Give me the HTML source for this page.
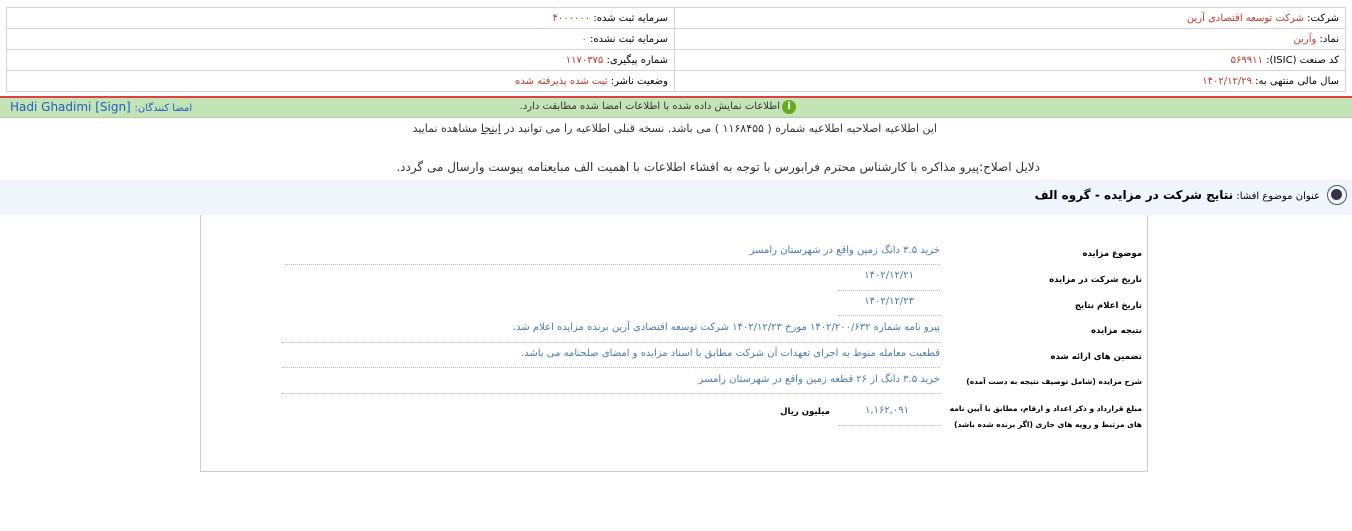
<!DOCTYPE html><html><head><meta charset="utf-8"><style>
body{margin:0;width:1352px;height:531px;background:#fff;font-family:"DejaVu Sans","Liberation Sans",sans-serif;font-size:10px;color:#000;position:relative;overflow:hidden}
.a{position:absolute;white-space:nowrap;direction:rtl}
.o{color:#c0392b}
.b{color:#4a7ab0}
table{position:absolute;left:6px;top:7px;width:1340px;border-collapse:collapse;direction:rtl}
td{border:1px solid #d4d4d4;height:20px;padding:0 6px;direction:rtl;text-align:right;font-size:10px}
.dl{position:absolute;border-bottom:1px dotted #bbb;height:0}
.lb{font-weight:bold;font-size:8.5px}
</style></head><body>
<table><tr><td style="width:658px">شرکت: <span class="o">شرکت توسعه اقتصادی آرین</span></td><td>سرمایه ثبت شده: <span class="o">۴۰۰۰۰۰۰</span></td></tr>
<tr><td>نماد: <span class="o">وآرین</span></td><td>سرمایه ثبت نشده: <span class="o">۰</span></td></tr>
<tr><td>کد صنعت (ISIC): <span class="o">۵۶۹۹۱۱</span></td><td>شماره پیگیری: <span class="o">۱۱۷۰۳۷۵</span></td></tr>
<tr><td>سال مالی منتهی به: <span class="o">۱۴۰۲/۱۲/۲۹</span></td><td>وضعیت ناشر: <span class="o">ثبت شده پذیرفته شده</span></td></tr></table>
<div style="position:absolute;left:0;top:96px;width:1352px;height:2px;background:#e04040"></div>
<div style="position:absolute;left:0;top:98px;width:1352px;height:19px;background:#c4e3b6;border-bottom:1px solid #b0d0a0"></div>
<div class="a" style="right:572px;top:101px;color:#333">اطلاعات نمایش داده شده با اطلاعات امضا شده مطابقت دارد.</div>
<div style="position:absolute;left:782px;top:100px;width:14px;height:14px;border-radius:50%;background:#6aaa20;color:#fff;font-size:10px;text-align:center;line-height:14px;font-weight:bold">i</div>
<div class="a" style="left:10px;top:100px;color:#2060c0;font-size:12px;direction:ltr">Hadi Ghadimi [Sign] <span style="font-size:10px">:امضا کنندگان</span></div>
<div class="a" style="right:415px;top:122px;font-size:11px;color:#333">این اطلاعیه اصلاحیه اطلاعیه شماره ( ۱۱۶۸۴۵۵ ) می باشد. نسخه قبلی اطلاعیه را می توانید در <u>اینجا</u> مشاهده نمایید</div>
<div class="a" style="right:312px;top:160px;font-size:12px;color:#333">دلایل اصلاح:پیرو مذاکره با کارشناس محترم فرابورس با توجه به افشاء اطلاعات با اهمیت الف مبایعنامه پیوست وارسال می گردد.</div>
<div style="position:absolute;left:0;top:179px;width:1352px;height:36px;background:#eff5fb"></div>
<div class="a" style="right:32px;top:188px;font-size:10px">عنوان موضوع افشا: <b style="font-size:12px">نتایج شرکت در مزایده - گروه الف</b></div>
<div style="position:absolute;left:1327px;top:185px;width:18px;height:18px;border-radius:50%;border:1px solid #556"></div>
<div style="position:absolute;left:1331px;top:189px;width:11px;height:11px;border-radius:50%;background:#334"></div>
<div style="position:absolute;left:200px;top:215px;width:946px;height:256px;border:1px solid #ccc;border-top:none"></div>
<div class="a lb" style="right:210px;top:249px">موضوع مزایده</div>
<div class="a b" style="right:412px;top:245px">خرید ۳.۵ دانگ زمین واقع در شهرستان رامسر</div>
<div class="dl" style="left:285px;width:655px;top:264px"></div>
<div class="a lb" style="right:210px;top:275px">تاریخ شرکت در مزایده</div>
<div class="a b" style="right:438px;top:270px">۱۴۰۲/۱۲/۲۱</div>
<div class="dl" style="left:838px;width:102px;top:290px"></div>
<div class="a lb" style="right:210px;top:301px">تاریخ اعلام نتایج</div>
<div class="a b" style="right:438px;top:296px">۱۴۰۲/۱۲/۲۳</div>
<div class="dl" style="left:838px;width:102px;top:315px"></div>
<div class="a lb" style="right:210px;top:326px">نتیجه مزایده</div>
<div class="a b" style="right:412px;top:322px">پیرو نامه شماره ۱۴۰۲/۲۰۰/۶۳۲ مورخ ۱۴۰۲/۱۲/۲۳ شرکت توسعه اقتصادی آرین برنده مزایده اعلام شد.</div>
<div class="dl" style="left:282px;width:658px;top:342px"></div>
<div class="a lb" style="right:210px;top:352px">تضمین های ارائه شده</div>
<div class="a b" style="right:412px;top:348px">قطعیت معامله منوط به اجرای تعهدات آن شرکت مطابق با اسناد مزایده و امضای صلحنامه می باشد.</div>
<div class="dl" style="left:282px;width:658px;top:367px"></div>
<div class="a lb" style="right:210px;top:377px;font-size:7.5px">شرح مزایده (شامل توصیف نتیجه به دست آمده)</div>
<div class="a b" style="right:412px;top:374px">خرید ۳.۵ دانگ از ۲۶ قطعه زمین واقع در شهرستان رامسر</div>
<div class="dl" style="left:282px;width:658px;top:393px"></div>
<div class="a lb" style="right:210px;top:401px;line-height:16px;font-size:7.5px">مبلغ قرارداد و ذکر اعداد و ارقام، مطابق با آیین نامه<br>های مرتبط و رویه های جاری (اگر برنده شده باشد)</div>
<div class="a b" style="right:443px;top:405px">۱,۱۶۲,۰۹۱</div>
<div class="a lb" style="right:522px;top:407px">میلیون ریال</div>
<div class="dl" style="left:838px;width:102px;top:425px"></div>
</body></html>
